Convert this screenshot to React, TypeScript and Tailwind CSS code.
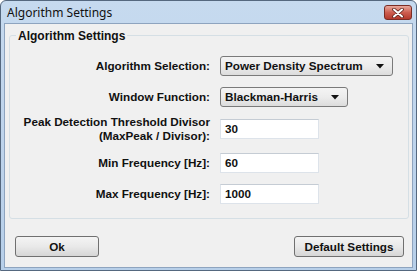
const font = "font-['Liberation_Sans',Arial,sans-serif]";

const Dropdown = ({ value, width }: { value: string; width: string }) => (
  <div
    className={`${width} h-[20px] flex items-center justify-between pl-[4px] pr-[8px] rounded-[3px] border border-[#7a7a7a] bg-gradient-to-b from-[#f4f4f4] via-[#ececec] to-[#dcdcdc] text-[11.7px] font-bold text-[#111]`}
  >
    <span>{value}</span>
    <svg width="8" height="5" viewBox="0 0 8 5">
      <path d="M0 0 H8 L4 4.5 Z" fill="#111" />
    </svg>
  </div>
);

const TextBox = ({ value }: { value: string }) => (
  <div className="w-[99px] h-[20px] flex items-center pl-[4px] border border-[#dde3ea] border-t-[#c5ccd4] bg-white text-[11.7px] font-bold text-[#111]">
    {value}
  </div>
);

const Row = ({ label, children, className }: { label: React.ReactNode; children: React.ReactNode; className?: string }) => (
  <div className={`flex items-center ${className ?? ''}`}>
    <div className="w-[200px] text-right text-[11.7px] font-bold leading-[14px] text-[#111]">{label}</div>
    <div className="ml-[10px]">{children}</div>
  </div>
);

const App = () => {
  return (
    <div className={`${font} w-[417px] h-[271px] flex flex-col border border-[#55687f] rounded-t-[6px] overflow-hidden bg-gradient-to-b from-[#c6daef] via-[#bed4ec] to-[#b7cfe9]`}>
      <div className="h-[22px] flex items-start justify-between">
        <span className="mt-[3px] pl-[6px] text-[12px] text-[#111] font-['Noto_Sans','Liberation_Sans',sans-serif]">
          Algorithm Settings
        </span>
        <div className="mt-[4px] mr-[4px] w-[28px] h-[15px] flex items-center justify-center rounded-[3px] border border-[#7a2d25] bg-gradient-to-b from-[#e7a89d] via-[#cd5e50] to-[#b4392c]">
          <svg width="12" height="10" viewBox="0 0 12 10">
            <path d="M2 1.5 L10 8.5 M10 1.5 L2 8.5" stroke="#5a231c" strokeWidth="3.6" strokeLinecap="round" />
            <path d="M2 1.5 L10 8.5 M10 1.5 L2 8.5" stroke="#ffffff" strokeWidth="2" strokeLinecap="round" />
          </svg>
        </div>
      </div>

      <div className="mx-[3px] mb-[2px] flex-1 flex flex-col border border-[#8ea4bf] bg-[#f0f0f0]">
        <div className="relative mt-[11px] ml-[4px] mr-[3px] h-[184px] rounded-[3px] border border-[#d5dfe5] pt-[20px]">
          <span className="absolute -top-[9px] left-[6px] px-[2px] bg-[#f0f0f0] text-[12px] font-bold text-[#111]">
            Algorithm Settings
          </span>
          <Row label="Algorithm Selection:">
            <Dropdown value="Power Density Spectrum" width="w-[173px]" />
          </Row>
          <Row label="Window Function:" className="mt-[11px]">
            <Dropdown value="Blackman-Harris" width="w-[128px]" />
          </Row>
          <Row
            className="mt-[8px] h-[28px]"
            label={
              <>
                Peak Detection Threshold Divisor
                <br />
                (MaxPeak / Divisor):
              </>
            }
          >
            <TextBox value="30" />
          </Row>
          <Row label="Min Frequency [Hz]:" className="mt-[10px]">
            <TextBox value="60" />
          </Row>
          <Row label="Max Frequency [Hz]:" className="mt-[11px]">
            <TextBox value="1000" />
          </Row>
        </div>

        <div className="mt-[17px] flex justify-between pl-[10px] pr-[8px]">
          <button className="w-[84px] h-[21px] rounded-[3px] border border-[#707070] bg-gradient-to-b from-[#f4f4f4] via-[#e9e9e9] to-[#d6d6d6] text-[11.7px] font-bold text-[#111]">
            Ok
          </button>
          <button className="w-[110px] h-[21px] rounded-[3px] border border-[#707070] bg-gradient-to-b from-[#f4f4f4] via-[#e9e9e9] to-[#d6d6d6] text-[11.7px] font-bold text-[#111]">
            Default Settings
          </button>
        </div>
      </div>
    </div>
  );
};

export default App;
